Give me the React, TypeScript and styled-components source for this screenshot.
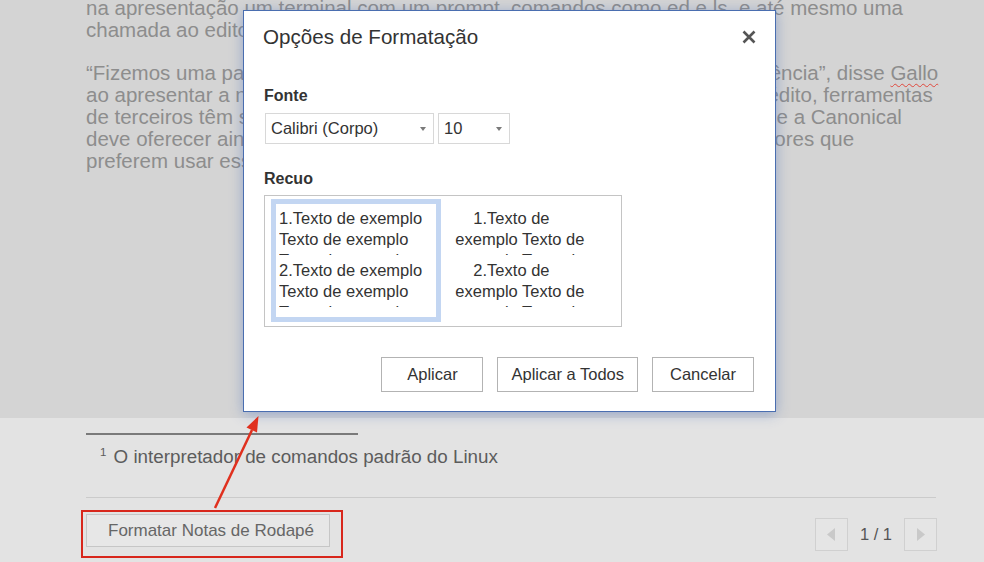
import styled, { createGlobalStyle } from "styled-components"

const GlobalStyle = createGlobalStyle`
  html, body {
    margin: 0;
    padding: 0;
  }
  body {
    font-family: "Liberation Sans", Arial, sans-serif;
    background: #e3e3e3;
  }
`

const Page = styled.div`
  position: relative;
  width: 984px;
  height: 562px;
  overflow: hidden;
  display: flex;
  flex-direction: column;
`

const Editor = styled.div`
  flex: none;
  height: 418px;
  box-sizing: border-box;
  padding-left: 86px;
  background: #d4d4d4;
  overflow: hidden;
`

const DocText = styled.div`
  margin-top: -3px;
  font-size: 20.5px;
  line-height: 22px;
  color: #8d8d8d;
`

const Paragraph = styled.p`
  margin: 0 0 20.5px;
`

const Line = styled.span`
  display: block;
  white-space: nowrap;
`

const Misspelled = styled.span`
  text-decoration: underline wavy #e0483d;
  text-decoration-thickness: 1px;
  text-underline-offset: 3px;
`

const Footer = styled.div`
  flex: 1;
  box-sizing: border-box;
  padding: 15px 48px 0 86px;
  background: #e3e3e3;
`

const NoteRule = styled.div`
  width: 272px;
  height: 2px;
  background: #7a7a7a;
`

const Footnote = styled.p`
  margin: 11px 0 0;
  padding-left: 14px;
  font-size: 18.8px;
  line-height: 22px;
  color: #5c5c5c;

  sup {
    font-size: 11.5px;
    line-height: 0;
    vertical-align: 7px;
    margin-right: 2px;
  }
`

const Divider = styled.div`
  margin-top: 29px;
  height: 1px;
  background: #cbcbcb;
`

const BottomBar = styled.div`
  display: flex;
  align-items: center;
  justify-content: space-between;
  margin: 12px -1px 0 -5px;
`

const Highlight = styled.div`
  border: 2px solid #d8271c;
  padding: 2px 11px 9px 3px;
`

const FormatButton = styled.button`
  height: 33px;
  width: 244px;
  padding: 0 0 0 6px;
  border: 1px solid #c6c6c6;
  background: #e7e7e7;
  font-family: inherit;
  font-size: 17px;
  color: #666;
`

const Pager = styled.div`
  display: flex;
  align-items: center;
  gap: 12px;
`

const PagerButton = styled.button`
  width: 33px;
  height: 33px;
  padding: 0;
  border: 1px solid #d0d0d0;
  background: #e5e5e5;
  display: flex;
  align-items: center;
  justify-content: center;
`

const PageInfo = styled.span`
  font-size: 16.5px;
  color: #555;
`

const Dialog = styled.div`
  position: absolute;
  left: 243px;
  top: 10px;
  width: 533px;
  height: 402px;
  box-sizing: border-box;
  display: flex;
  flex-direction: column;
  background: #fff;
  border: 1px solid #4a6eb0;
  box-shadow: 0 2px 12px rgba(70, 110, 190, 0.45);
  color: #333;
`

const DialogHeader = styled.div`
  display: flex;
  align-items: center;
  justify-content: space-between;
  padding: 13px 19px 0 19px;
`

const DialogTitle = styled.h2`
  margin: 0;
  font-size: 20.6px;
  line-height: 26px;
  font-weight: normal;
  color: #333;
`

const CloseButton = styled.button`
  width: 14px;
  height: 14px;
  padding: 0;
  border: 0;
  background: none;
  display: flex;
`

const DialogBody = styled.div`
  display: flex;
  flex-direction: column;
  padding: 0 20px;
`

const FieldLabel = styled.div<{ $gap: number }>`
  margin-top: ${(p) => p.$gap}px;
  font-size: 16px;
  line-height: 20px;
  font-weight: bold;
  color: #333;
`

const SelectRow = styled.div`
  display: flex;
  gap: 4px;
  margin-top: 7px;
  padding-left: 1px;
`

const SelectBox = styled.div<{ $width: number }>`
  width: ${(p) => p.$width}px;
  height: 31px;
  box-sizing: border-box;
  display: flex;
  align-items: center;
  justify-content: space-between;
  padding: 0 7px 0 5px;
  border: 1px solid #d8d8d8;
  font-size: 16.5px;
  color: #333;
`

const Caret = styled.span`
  width: 0;
  height: 0;
  border-left: 3px solid transparent;
  border-right: 3px solid transparent;
  border-top: 4px solid #7a7a7a;
`

const IndentBox = styled.div`
  width: 358px;
  box-sizing: border-box;
  margin-top: 6px;
  padding: 3px 6px 4px;
  border: 1px solid #c4c4c4;
  display: flex;
  gap: 6px;
`

const IndentOption = styled.div<{ $selected?: boolean; $hanging?: boolean }>`
  width: ${(p) => (p.$hanging ? 170 : 173)}px;
  height: 123px;
  box-sizing: border-box;
  display: flex;
  flex-direction: column;
  gap: 5px;
  padding: 4px ${(p) => (p.$hanging ? 17 : 3)}px 7px 3px;
  border: 5px solid ${(p) => (p.$selected ? "#c3d6f2" : "transparent")};
  font-size: 16.5px;
  line-height: 21px;
  color: #333;

  p {
    margin: 0;
    height: 47px;
    overflow: hidden;
    text-indent: ${(p) => (p.$hanging ? 18 : 0)}px;
  }
`

const ButtonRow = styled.div`
  display: flex;
  justify-content: flex-end;
  gap: 14px;
  margin-top: 30px;
  padding-right: 1px;
`

const ActionButton = styled.button`
  height: 35px;
  min-width: 102px;
  padding: 0 13px;
  border: 1px solid #b3b3b3;
  background: #fff;
  font-family: inherit;
  font-size: 16.5px;
  color: #333;
`

const Annotation = styled.svg`
  position: absolute;
  left: 0;
  top: 0;
  pointer-events: none;
`

const SAMPLE = "Texto de exemplo Texto de exemplo"

export default function App() {
  return (
    <>
      <GlobalStyle />
      <Page>
        <Editor>
          <DocText>
            <Paragraph>
              <Line>
                na apresentação um terminal com um prompt, comandos como ed e
                ls, e até mesmo uma
              </Line>
              <Line>chamada ao editor de texto vi.</Line>
            </Paragraph>
            <Paragraph>
              <Line>
                “Fizemos uma parceria com as comunidades para oferecer a melhor
                experiência”, disse <Misspelled>Gallo</Misspelled>
              </Line>
              <Line>
                ao apresentar a novidade nesta terça-feira. Apesar de o recurso
                ser algo inédito, ferramentas
              </Line>
              <Line>
                de terceiros têm sido amplamente usadas pelos desenvolvedores no
                Linux, e a Canonical
              </Line>
              <Line>
                deve oferecer ainda mais funções de integração para todos os
                desenvolvedores que
              </Line>
              <Line>preferem usar esse tipo de ferramenta.</Line>
            </Paragraph>
          </DocText>
        </Editor>

        <Footer>
          <NoteRule />
          <Footnote>
            <sup>1</sup> O interpretador de comandos padrão do Linux
          </Footnote>
          <Divider />
          <BottomBar>
            <Highlight>
              <FormatButton>Formatar Notas de Rodapé</FormatButton>
            </Highlight>
            <Pager>
              <PagerButton>
                <svg width="8" height="13" viewBox="0 0 8 13">
                  <path d="M8 0 L0 6.5 L8 13 Z" fill="#c9c9c9" />
                </svg>
              </PagerButton>
              <PageInfo>1 / 1</PageInfo>
              <PagerButton>
                <svg width="8" height="13" viewBox="0 0 8 13">
                  <path d="M0 0 L8 6.5 L0 13 Z" fill="#c9c9c9" />
                </svg>
              </PagerButton>
            </Pager>
          </BottomBar>
        </Footer>

        <Dialog>
          <DialogHeader>
            <DialogTitle>Opções de Formatação</DialogTitle>
            <CloseButton aria-label="Fechar">
              <svg width="14" height="14" viewBox="0 0 14 14">
                <path
                  d="M1.5 1.5 L12.5 12.5 M12.5 1.5 L1.5 12.5"
                  stroke="#555"
                  strokeWidth="2.6"
                />
              </svg>
            </CloseButton>
          </DialogHeader>
          <DialogBody>
            <FieldLabel $gap={36}>Fonte</FieldLabel>
            <SelectRow>
              <SelectBox $width={169}>
                Calibri (Corpo)
                <Caret />
              </SelectBox>
              <SelectBox $width={72}>
                10
                <Caret />
              </SelectBox>
            </SelectRow>
            <FieldLabel $gap={25}>Recuo</FieldLabel>
            <IndentBox>
              <IndentOption $selected>
                <p>1.Texto de exemplo {SAMPLE}</p>
                <p>2.Texto de exemplo {SAMPLE}</p>
              </IndentOption>
              <IndentOption $hanging>
                <p>1.Texto de exemplo {SAMPLE}</p>
                <p>2.Texto de exemplo {SAMPLE}</p>
              </IndentOption>
            </IndentBox>
            <ButtonRow>
              <ActionButton>Aplicar</ActionButton>
              <ActionButton>Aplicar a Todos</ActionButton>
              <ActionButton>Cancelar</ActionButton>
            </ButtonRow>
          </DialogBody>
        </Dialog>

        <Annotation width="984" height="562" viewBox="0 0 984 562">
          <line
            x1="215"
            y1="508"
            x2="252"
            y2="430"
            stroke="#e0301e"
            strokeWidth="2.5"
          />
          <polygon points="258.5,416 257,432.5 246.5,427.5" fill="#e0301e" />
        </Annotation>
      </Page>
    </>
  )
}
